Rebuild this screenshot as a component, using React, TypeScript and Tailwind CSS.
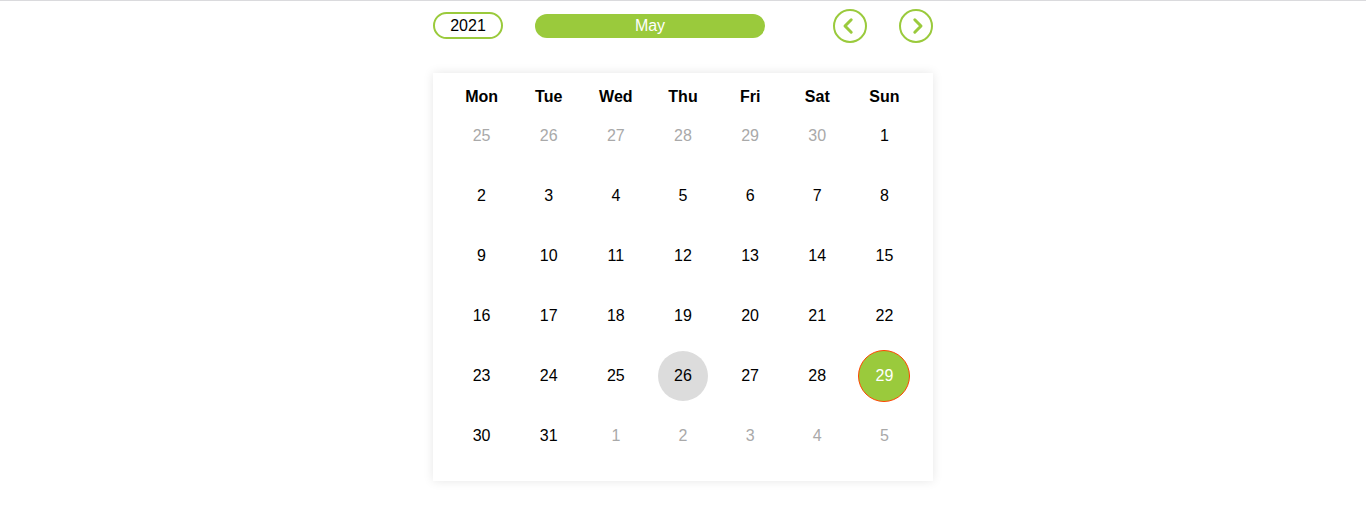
const weekdays = ["Mon", "Tue", "Wed", "Thu", "Fri", "Sat", "Sun"];

const weeks = [
  [25, 26, 27, 28, 29, 30, 1],
  [2, 3, 4, 5, 6, 7, 8],
  [9, 10, 11, 12, 13, 14, 15],
  [16, 17, 18, 19, 20, 21, 22],
  [23, 24, 25, 26, 27, 28, 29],
  [30, 31, 1, 2, 3, 4, 5],
];

function dayStyle(week: number, day: number) {
  if ((week === 0 && day > 20) || (week === 5 && day < 20)) return "size-[50px] text-[#a9a9a9]";
  if (week === 4 && day === 26) return "size-[50px] bg-[#dcdcdc]";
  if (week === 4 && day === 29) return "size-[52px] border border-[#ff4500] bg-[#9aca3c] text-white";
  return "size-[50px]";
}

const navButton =
  "flex size-[34px] items-center justify-center rounded-full border-2 border-[#9aca3c] text-[#9aca3c]";

function Chevron({ points }: { points: string }) {
  return (
    <svg
      viewBox="0 0 30 30"
      className="size-[30px] shrink-0"
      fill="none"
      stroke="currentColor"
      strokeWidth="3"
      strokeLinecap="round"
      strokeLinejoin="round"
      aria-hidden="true"
    >
      <polyline points={points} />
    </svg>
  );
}

export default function App() {
  return (
    <main className="border-t border-[#dadadd] bg-white px-4 pb-7 font-['Liberation_Sans',Arial,sans-serif] text-base text-black">
      <div className="mx-auto max-w-[500px]">
        <header className="flex items-center justify-between pt-2">
          <button type="button" className="mb-px w-[70px] rounded-full border-2 border-[#9aca3c] leading-[23px]">
            2021
          </button>
          <button type="button" className="w-[230px] rounded-full bg-[#9aca3c] leading-6 text-white">
            May
          </button>
          <nav className="ml-9 flex gap-8">
            <button type="button" aria-label="Previous month" className={navButton}>
              <Chevron points="16.2,8.8 10,15 16.2,21.2" />
            </button>
            <button type="button" aria-label="Next month" className={navButton}>
              <Chevron points="13.8,8.8 20,15 13.8,21.2" />
            </button>
          </nav>
        </header>
        <section className="mt-[30px] px-[15px] pt-[14px] pb-[15px] shadow-[0_0_10px_rgba(0,0,0,0.1)]">
          <table className="w-full table-fixed border-collapse text-center">
            <thead>
              <tr>
                {weekdays.map((name) => (
                  <th key={name} scope="col" className="h-[19px] p-0 leading-[19px] font-bold">
                    {name}
                  </th>
                ))}
              </tr>
            </thead>
            <tbody>
              {weeks.map((days, week) => (
                <tr key={week}>
                  {days.map((day) => (
                    <td key={day} className="h-[60px] p-0">
                      <button
                        type="button"
                        className={`mx-auto flex items-center justify-center rounded-full ${dayStyle(week, day)}`}
                      >
                        {day}
                      </button>
                    </td>
                  ))}
                </tr>
              ))}
            </tbody>
          </table>
        </section>
      </div>
    </main>
  );
}
